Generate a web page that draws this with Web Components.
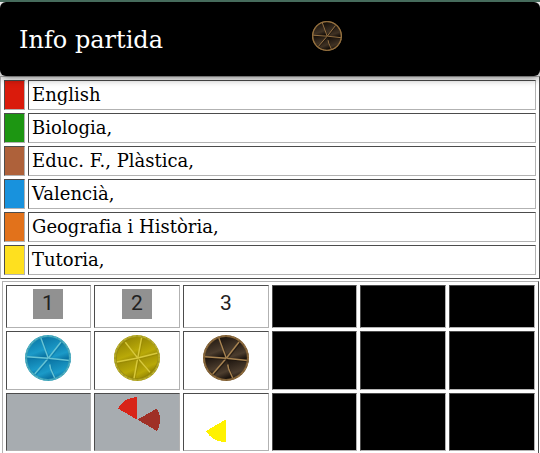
<!DOCTYPE html>
<html lang="ca">
<head>
<meta charset="utf-8">
<title>Info partida</title>
<style>
html,body{margin:0;height:453px;overflow:hidden;background:#fff}
body{font-family:"DejaVu Serif",serif;color:#000}
</style>
</head>
<body>
<game-page></game-page>
<script>
function define(name, html, setup) {
  customElements.define(name, class extends HTMLElement {
    connectedCallback() {
      if (this.shadowRoot) return;
      const t = document.createElement('template');
      t.innerHTML = html;
      this.attachShadow({mode: 'open'}).append(t.content.cloneNode(true));
      if (setup) setup(this, this.shadowRoot);
    }
  });
}

/* Six-slot trivia wheel; a palette is [rim, light slot, dark slot, spoke] */
const palettes = {
  blue: ['#3c9fb6', '#1b9ac8', '#0a74a3', '#68c4d4'],
  yellow: ['#a59b22', '#b9a908', '#958604', '#d8c93c'],
  brown: ['#7a5c34', '#4c3d2e', '#1c140e', '#a88452'],
  dark: ['#8f6c3c', '#403224', '#130d08', '#a07a48']
};
/* Spoke ends relative to the wheel's centre, clockwise from the upper left */
const forward = {hub: [0.3, 0.3], ends: [[-7.3, -20.5], [13, -16], [21.5, 2.5], [6.7, 20], [-13.3, 16], [-21.2, -1.2]], split: true};
const mirrored = {hub: [0.7, 0], ends: [[-11.7, -15.7], [4.7, -20.7], [20.7, -5], [13, 14.3], [-3, 20.3], [-20.3, 4]], split: false};

define('trivia-wheel', `<style>
:host{display:block;flex:none}
svg{display:block;width:100%;height:100%}
</style><svg viewBox="-23 -23 46 46"></svg>`, (el, root) => {
  const kind = el.getAttribute('kind');
  const [rim, light, shade, spoke] = palettes[kind];
  const {hub: [cx, cy], ends, split} = kind === 'yellow' ? mirrored : forward;
  const id = 'slot-' + kind;
  let s = `<defs><linearGradient id="${id}" x1=".2" y1="0" x2=".6" y2="1"><stop offset="0" stop-color="${shade}"/><stop offset=".7" stop-color="${light}"/><stop offset="1" stop-color="${shade}"/></linearGradient></defs>
  <circle r="23" fill="${rim}"/><circle r="21" fill="${shade}"/>`;
  ends.forEach(([x, y], i) => {
    const [nx, ny] = ends[(i + 1) % 6];
    s += `<path d="M${cx} ${cy}L${x} ${y}A21 21 0 0 1 ${nx} ${ny}Z" fill="url(#${id})"/>`;
  });
  ends.forEach(([x, y], i) => {
    const d = split && i === 3 ? `M1.7 6.5L2.7 11L${x} ${y}` : `M${cx} ${cy}L${x} ${y}`;
    s += `<path d="${d}" transform="translate(.9 1)" stroke="${shade}" stroke-width="1.4" opacity=".6" fill="none"/>
    <path d="${d}" stroke="${spoke}" stroke-width="1.4" fill="none"/>`;
  });
  s += `<circle r="21.8" fill="none" stroke="${rim}" stroke-width="1.8"/><circle r="22.2" fill="none" stroke="${spoke}" stroke-width="1.1" stroke-dasharray="3 2" opacity=".6"/>`;
  root.querySelector('svg').innerHTML = s;
});

define('page-header', `<style>
:host{display:flex;box-sizing:border-box;height:74px;background:#000;color:#fff;border-radius:6px;padding:0 0 0 19px;box-shadow:0 2px 9px rgba(0,0,0,.55);position:relative;z-index:1}
h1{margin:0;width:293px;font-size:24px;font-weight:400;line-height:76px;white-space:nowrap}
trivia-wheel{width:30px;height:30px;margin-top:19px}
</style><h1><slot></slot></h1><trivia-wheel kind="dark"></trivia-wheel>`);

define('subject-row', `<style>
:host{display:grid;grid-template-columns:21px 508px;gap:3px;height:30px}
div{box-sizing:border-box;border:1px solid;border-color:#4c4c4c #b2b2b2 #b2b2b2 #4c4c4c}
.name{padding-left:3px;font-size:18px;line-height:28px;white-space:nowrap}
</style><div class="swatch"></div><div class="name"><slot></slot></div>`, (el, root) => {
  root.querySelector('.swatch').style.background = el.getAttribute('color');
});

define('subject-table', `<style>
:host{display:grid;gap:3px;box-sizing:border-box;width:540px;height:203px;padding:3px;border:1px solid;border-color:#b2b2b2 #4c4c4c #4c4c4c #b2b2b2}
</style><slot></slot>`);

define('board-cell', `<style>
:host{display:flex;justify-content:center;align-items:flex-start;box-sizing:border-box;padding-top:3px;border:1px solid;border-color:#4c4c4c #b2b2b2 #b2b2b2 #4c4c4c}
:host([fill=gray]){background:#a7acb0}
:host([fill=black]){background:#000}
</style><slot></slot>`);

define('turn-number', `<style>
:host{display:block;width:30px;height:30px;text-align:center;font:21px/28px Roboto,"Liberation Sans",sans-serif;color:#222}
:host([played]){background:#919191}
</style><slot></slot>`);

define('won-wedges', `<style>
:host{display:block;width:46px;height:46px}
svg{display:block}
</style><svg width="46" height="46" viewBox="0 0 46 46" shape-rendering="crispEdges"></svg>`, (el, root) => {
  const wedges = {
    red: '<path d="M23 22.6L4 11.5A23 23 0 0 1 23 0Z" fill="#d82418"/>',
    maroon: '<path d="M23.5 22.6L43 11.5A23 23 0 0 1 43 34Z" fill="#9f3026"/>',
    yellow: '<path d="M22.5 22.6V45A23 23 0 0 1 3 34Z" fill="#fff200"/>'
  };
  root.querySelector('svg').innerHTML = el.getAttribute('colors').split(' ').map(c => wedges[c]).join('');
});

define('player-board', `<style>
:host{display:grid;grid-template-columns:85px 86px 86px 85px 86px 86px;grid-template-rows:43px 59px 58px;gap:3px;box-sizing:border-box;width:537px;height:180px;margin:2px 0 0 2px;padding:3px;border:1px solid;border-color:#b2b2b2 #4c4c4c #4c4c4c #b2b2b2}
trivia-wheel{width:46px;height:46px}
.first{padding-right:1px}
</style>
<board-cell class="first"><turn-number played>1</turn-number></board-cell>
<board-cell><turn-number played>2</turn-number></board-cell>
<board-cell><turn-number>3</turn-number></board-cell>
<board-cell fill="black"></board-cell><board-cell fill="black"></board-cell><board-cell fill="black"></board-cell>
<board-cell class="first"><trivia-wheel kind="blue"></trivia-wheel></board-cell>
<board-cell><trivia-wheel kind="yellow"></trivia-wheel></board-cell>
<board-cell><trivia-wheel kind="brown"></trivia-wheel></board-cell>
<board-cell fill="black"></board-cell><board-cell fill="black"></board-cell><board-cell fill="black"></board-cell>
<board-cell fill="gray"></board-cell>
<board-cell fill="gray"><won-wedges colors="red maroon"></won-wedges></board-cell>
<board-cell><won-wedges colors="yellow"></won-wedges></board-cell>
<board-cell fill="black"></board-cell><board-cell fill="black"></board-cell><board-cell fill="black"></board-cell>`);

define('game-page', `<style>
:host{display:block;width:540px;height:453px;overflow:hidden;border-top:2px solid #466b5c;box-sizing:border-box}
</style>
<page-header>Info partida</page-header>
<subject-table>
<subject-row color="#da1b0c">English</subject-row>
<subject-row color="#1d9612">Biologia,</subject-row>
<subject-row color="#ae613a">Educ. F., Plàstica,</subject-row>
<subject-row color="#1892dd">Valencià,</subject-row>
<subject-row color="#e2721b">Geografia i Història,</subject-row>
<subject-row color="#fee01f">Tutoria,</subject-row>
</subject-table>
<player-board></player-board>`);
</script>
</body>
</html>
